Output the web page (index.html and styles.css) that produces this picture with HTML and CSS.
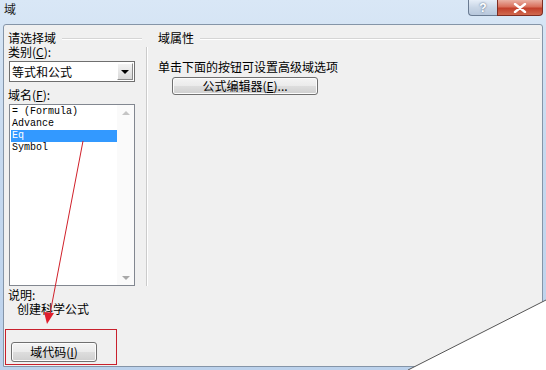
FILE: index.html
```html
<!DOCTYPE html>
<html lang="zh-CN">
<head>
  <meta charset="UTF-8">
  <title>域</title>
  <link rel="stylesheet" href="styles.css">
</head>
<body>
  <div class="window">
    <div class="titlebar">
      <span class="title">域</span>
      <div class="caption-btns">
        <span class="btn-help">?</span>
        <span class="btn-close">
          <svg width="14" height="10" viewBox="0 0 14 10"><path d="M2 1 L12 9 M12 1 L2 9" stroke="#fff" stroke-width="2.4" stroke-linecap="round"/></svg>
        </span>
      </div>
    </div>

    <div class="client">
      <div class="left-pane">
        <div class="group-head"><span>请选择域</span><i></i></div>
        <div class="label">类别(<u>C</u>):</div>
        <div class="combo">
          <span class="combo-text">等式和公式</span>
          <span class="combo-arrow"></span>
        </div>
        <div class="label label-gap">域名(<u>F</u>):</div>
        <div class="listbox">
          <ul class="list-items">
            <li>= (Formula)</li>
            <li>Advance</li>
            <li class="selected">Eq</li>
            <li>Symbol</li>
          </ul>
          <div class="scrollbar">
            <span class="sb-up"></span>
            <span class="sb-down"></span>
          </div>
        </div>
        <div class="label desc">说明:</div>
        <div class="label desc-text">创建科学公式</div>
        <div class="footer">
          <button class="btn btn-code">域代码(<u>I</u>)</button>
        </div>
      </div>

      <div class="right-pane">
        <div class="group-head right-head"><span>域属性</span><i></i></div>
        <div class="props">
          <div class="label props-text">单击下面的按钮可设置高级域选项</div>
          <button class="btn btn-editor">公式编辑器(<u>E</u>)...</button>
        </div>
      </div>
    </div>

    <!-- annotations over the screenshot -->
    <div class="mark-box"></div>
    <svg class="overlay" width="546" height="370" viewBox="0 0 546 370">
      <line x1="83" y1="141" x2="50" y2="314" stroke="#d0202a" stroke-width="1"/>
      <polygon points="47,324 44,312 54,313" fill="#e01e2c"/>
      <polygon points="408,370 546,300 546,370" fill="#fff"/>
      <line x1="408" y1="370" x2="546" y2="300" stroke="#555" stroke-width="1"/>
    </svg>
  </div>
</body>
</html>
```

FILE: styles.css
```css
* {
  margin: 0;
  padding: 0;
  box-sizing: border-box;
  list-style: none;
}

body {
  background: #fff;
  font-family: "Noto Sans CJK SC", "Liberation Sans", sans-serif;
  font-size: 12px;
  color: #000;
  overflow: hidden;
}

u {
  text-decoration: underline;
}

.window {
  position: relative;
  width: 546px;
  height: 370px;
  background: linear-gradient(180deg, #d9e7f6 0%, #c6d9ef 40%, #bcd2ec 100%);
  display: flex;
  flex-direction: column;
}

/* title bar */
.titlebar {
  height: 24px;
  display: flex;
  justify-content: space-between;
  align-items: flex-start;
}

.title {
  padding: 2px 0 0 4px;
  line-height: 14px;
  color: #1a1a1a;
}

.caption-btns {
  display: flex;
  margin-right: 3px;
}

.btn-help, .btn-close {
  height: 16px;
  display: flex;
  align-items: center;
  justify-content: center;
  border: 1px solid #6a7b92;
  border-top: none;
}

.btn-help {
  width: 29px;
  border-radius: 0 0 0 4px;
  border-right: none;
  background: linear-gradient(180deg, #e6eef8 0%, #c9d6e6 50%, #b7c7dc 100%);
  color: #fff;
  font-family: "Liberation Sans", sans-serif;
  font-weight: bold;
  font-size: 12px;
  text-shadow: 0 0 2px #3d5373;
}

.btn-close {
  width: 46px;
  border-radius: 0 0 4px 0;
  background: linear-gradient(180deg, #eab1a4 0%, #d9705c 45%, #c2402b 55%, #d06a50 100%);
  border-color: #7e2d22;
}

/* client area */
.client {
  flex: 1;
  margin: 0 3px 3px 3px;
  border: 1px solid #8595a8;
  border-radius: 3px 3px 0 0;
  background: #f0f0f0;
  display: flex;
  padding-left: 4px;
}

.left-pane {
  width: 138px;
  display: flex;
  flex-direction: column;
}

.label {
  height: 14px;
  line-height: 14px;
  white-space: nowrap;
}

.group-head {
  margin-top: 6px;
  height: 14px;
  line-height: 14px;
  display: flex;
  align-items: center;
}

.group-head i {
  flex: 1;
  margin: 1px 4px 0 6px;
  border-top: 1px solid #d5d5d5;
  border-bottom: 1px solid #fff;
}

/* combo */
.combo {
  margin: 2px 0 0 1px;
  width: 126px;
  height: 21px;
  background: #fff;
  border: 1px solid #6f6f6f;
  display: flex;
  align-items: center;
  justify-content: space-between;
}

.combo-text {
  padding-left: 2px;
  line-height: 14px;
}

.combo-arrow {
  width: 16px;
  height: 17px;
  margin-right: 1px;
  background: linear-gradient(180deg, #f4f4f4, #d8d8d8);
  border: 1px solid #8a8a8a;
  border-top-color: #fff;
  border-left-color: #fff;
  display: flex;
  align-items: center;
  justify-content: center;
}

.combo-arrow::after {
  content: "";
  border-left: 4px solid transparent;
  border-right: 4px solid transparent;
  border-top: 4px solid #000;
}

.label-gap {
  margin-top: 6px;
}

/* list box */
.listbox {
  margin: 2px 0 0 1px;
  width: 126px;
  height: 182px;
  background: #fff;
  border: 1px solid #828790;
  display: flex;
}

.list-items {
  flex: 1;
  padding: 1px 0 0 1px;
  font-family: "Liberation Mono", monospace;
  font-size: 10px;
}

.list-items li {
  height: 12px;
  line-height: 12px;
  padding-left: 1px;
}

.list-items .selected {
  background: #3399ff;
  color: #fff;
}

.scrollbar {
  width: 17px;
  background: #fafafa;
  display: flex;
  flex-direction: column;
  justify-content: space-between;
  align-items: center;
  padding: 6px 0 5px;
}

.sb-up, .sb-down {
  border-left: 4px solid transparent;
  border-right: 4px solid transparent;
}

.sb-up {
  border-bottom: 4px solid #c4c4c4;
}

.sb-down {
  border-top: 4px solid #a8a8a8;
}

.desc {
  margin-top: 2px;
}

.desc-text {
  padding-left: 9px;
}

.footer {
  margin-top: 26px;
  padding-left: 3px;
}

/* buttons */
.btn {
  font-family: "Noto Sans CJK SC", "Liberation Sans", sans-serif;
  font-size: 12px;
  line-height: 14px;
  color: #000;
  border: 1px solid #707070;
  border-radius: 3px;
  background: linear-gradient(180deg, #f4f4f4 0%, #ebebeb 48%, #dddddd 52%, #cfcfcf 100%);
  box-shadow: inset 0 0 0 1px #fcfcfc;
}

.btn-code {
  width: 86px;
  height: 20px;
}

/* right side */
.right-pane {
  flex: 1;
  display: flex;
  flex-direction: column;
  margin-right: 2px;
}

.right-head {
  padding-left: 12px;
}

.right-head i {
  margin-right: 0;
}

.props {
  margin-top: 2px;
  height: 239px;
  border-left: 1px solid #cbcbcb;
  box-shadow: 1px 0 0 #fff inset;
  padding: 13px 0 0 11px;
  display: flex;
  flex-direction: column;
  align-items: flex-start;
}

.btn-editor {
  margin: 3px 0 0 14px;
  width: 146px;
  height: 18px;
}

/* annotations */
.mark-box {
  position: absolute;
  left: 5px;
  top: 329px;
  width: 112px;
  height: 36px;
  border: 1px solid #c8202c;
}

.overlay {
  position: absolute;
  left: 0;
  top: 0;
  pointer-events: none;
}
```
